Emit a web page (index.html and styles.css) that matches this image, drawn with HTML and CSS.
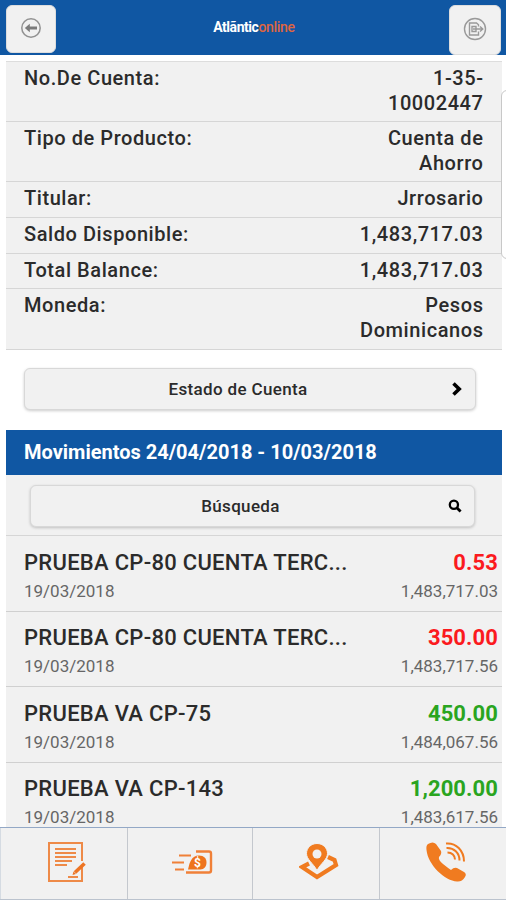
FILE: index.html
```html
<!DOCTYPE html>
<html lang="es">
<head>
  <meta charset="UTF-8">
  <meta name="viewport" content="width=device-width, initial-scale=1.0">
  <title>Atlántico Online</title>
  <link rel="stylesheet" href="styles.css">
</head>
<body>
  <div class="app">
    <header class="topbar">
      <button class="icon-btn back-btn" aria-label="Volver">
        <svg width="22" height="22" viewBox="0 0 22 22" fill="none" stroke="#929292">
          <circle cx="11" cy="11" r="9.2" stroke-width="1.5"/>
          <path d="M17 11H9" stroke="#7c7c7c" stroke-width="3"/>
          <path d="M4.8 11l5-4.2v8.4z" fill="#7c7c7c" stroke="none"/>
        </svg>
      </button>
      <div class="logo"><span class="logo-main">Atlãntic</span><span class="logo-online">online</span></div>
      <button class="icon-btn exit-btn" aria-label="Salir">
        <svg width="24" height="24" viewBox="0 0 24 24" fill="none" stroke="#999" stroke-width="1.4">
          <circle cx="12" cy="12" r="10.5"/>
          <path d="M15.5 9.5V7.8L13.5 6H6.5v12h9v-3.5"/>
          <path d="M9 9.5h4v5H9zM10 12h10M17 9.5l2.8 2.5-2.8 2.5"/>
        </svg>
      </button>
    </header>

    <main class="content">
      <!-- Datos de la cuenta -->
      <dl class="account">
        <div class="account-row"><dt>No.De Cuenta:</dt><dd>1-35-<br>10002447</dd></div>
        <div class="account-row"><dt>Tipo de Producto:</dt><dd>Cuenta de<br>Ahorro</dd></div>
        <div class="account-row"><dt>Titular:</dt><dd>Jrrosario</dd></div>
        <div class="account-row"><dt>Saldo Disponible:</dt><dd>1,483,717.03</dd></div>
        <div class="account-row"><dt>Total Balance:</dt><dd>1,483,717.03</dd></div>
        <div class="account-row"><dt>Moneda:</dt><dd>Pesos<br>Dominicanos</dd></div>
      </dl>

      <button class="wide-btn statement-btn">
        <span>Estado de Cuenta</span>
        <svg class="btn-icon" width="12" height="14" viewBox="0 0 12 14" fill="none" stroke="#000" stroke-width="3.6">
          <path d="M2.5 1.5L8.2 7l-5.7 5.5"/>
        </svg>
      </button>

      <!-- Movimientos -->
      <section class="movements">
        <h2 class="movements-title">Movimientos 24/04/2018 - 10/03/2018</h2>
        <div class="search-row">
          <button class="wide-btn search-btn">
            <span>Búsqueda</span>
            <svg class="btn-icon" width="14" height="14" viewBox="0 0 14 14" fill="none" stroke="#000">
              <circle cx="5.9" cy="5.7" r="4.1" stroke-width="2.3"/>
              <path d="M8.8 8.7l3.8 3.8" stroke-width="2.8"/>
            </svg>
          </button>
        </div>
        <div class="movement">
          <div class="movement-line"><span class="name">PRUEBA CP-80 CUENTA TERC...</span><span class="amount debit">0.53</span></div>
          <div class="movement-line small"><span>19/03/2018</span><span>1,483,717.03</span></div>
        </div>
        <div class="movement">
          <div class="movement-line"><span class="name">PRUEBA CP-80 CUENTA TERC...</span><span class="amount debit">350.00</span></div>
          <div class="movement-line small"><span>19/03/2018</span><span>1,483,717.56</span></div>
        </div>
        <div class="movement">
          <div class="movement-line"><span class="name">PRUEBA VA CP-75</span><span class="amount credit">450.00</span></div>
          <div class="movement-line small"><span>19/03/2018</span><span>1,484,067.56</span></div>
        </div>
        <div class="movement">
          <div class="movement-line"><span class="name">PRUEBA VA CP-143</span><span class="amount credit">1,200.00</span></div>
          <div class="movement-line small"><span>19/03/2018</span><span>1,483,617.56</span></div>
        </div>
      </section>
    </main>

    <div class="side-handle"></div>

    <nav class="tabbar">
      <a class="tab tab-shift">
        <svg width="40" height="42" viewBox="0 0 40 42" fill="none" stroke="#ee8a48">
          <path d="M35 25v15H2V2h33v18" stroke-width="2"/>
          <path d="M8 8h21M8 12h21M8 16h21M8 20h17M8 24h12M21 36h10" stroke-width="2"/>
          <path d="M28 31.5l9.5-9" stroke="#ed7423" stroke-width="3.6"/>
          <path d="M25.5 34l1-3.5 2.5 2.5z" fill="#ed7423" stroke="none"/>
        </svg>
      </a>
      <a class="tab tab-cash">
        <svg width="42" height="26" viewBox="0 0 42 26" fill="none" stroke="#f08038" stroke-width="2">
          <path d="M8 6.5h12M1 13.5h12M4 20.5h9"/>
          <path d="M25 2.5h13q2 0 2 2v17q0 2-2 2H15" stroke-width="2.4"/>
          <path d="M17 20.5c1.5-7 3.5-14 11-14 5 0 7.5 3 7.5 7s-2.5 7-6 7z" fill="#ee741d" stroke="none"/>
          <text class="coin" x="26.5" y="18" text-anchor="middle">$</text>
        </svg>
      </a>
      <a class="tab tab-shift">
        <svg width="40" height="38" viewBox="0 0 40 38">
          <path d="M10 20.5L3 24l15 10 19-12-1.5-5L29 14" fill="none" stroke="#f07b20" stroke-width="4.2"/>
          <path d="M18 .5c-6 0-10.500 4.500-10.500 10 0 6 6.500 9.500 10.500 17 4-7.500 10.500-11 10.500-17 0-5.500-4.500-10-10.500-10z" fill="#f07b20" stroke="#f1f1f1" stroke-width="1"/>
          <circle cx="18" cy="11" r="4.5" fill="#f1f1f1"/>
        </svg>
      </a>
      <a class="tab tab-shift">
        <svg width="42" height="42" viewBox="0 0 42 42">
          <path d="M3 3Q8 0 11 3l5 7q1 3-2 6-1 3 4 7t8 6q3-3 6-2l7 4q3 2 1 5-3 5-8 4.500C20 40 3 24 1.500 9 1.200 6 1.500 4 3 3z" fill="#f07b20"/>
          <g fill="none" stroke="#f07b20" stroke-width="2">
            <path d="M21 2.500c10-1 18 7 18 18"/>
            <path d="M21.500 7c7.500-.5 13 5 13 12.500"/>
            <path d="M22.500 11.500c4.500 0 7.500 3 7.500 7"/>
          </g>
        </svg>
      </a>
    </nav>
  </div>
</body>
</html>
```
FILE: styles.css
```css
* { box-sizing: border-box; }
body {
  margin: 0;
  background: #fff;
  font-family: Roboto, sans-serif;
  color: #2b2b2b;
}
.app {
  position: relative;
  display: flex;
  flex-direction: column;
  height: 900px;
  overflow: hidden;
}
button {
  font-family: inherit;
  color: inherit;
  background: #f1f1f1;
  border: 1px solid #ddd;
  padding: 0;
}

/* Cabecera */
.topbar {
  flex: none;
  height: 55px;
  background: #1057a3;
  display: flex;
  justify-content: space-between;
  align-items: flex-start;
  padding: 5px 5px 0 6px;
}
.icon-btn {
  display: flex;
  align-items: center;
  justify-content: center;
  border-radius: 6px;
  width: 50px;
  height: 48px;
}
.back-btn { padding-bottom: 3px; }
.exit-btn {
  width: 52px;
  height: 50px;
  padding-bottom: 2px;
}
.logo {
  font-size: 14px;
  line-height: 20px;
  margin: 12px 0 0 3px;
  display: flex;
}
.logo-main {
  color: #fff;
  font-weight: 700;
  letter-spacing: -.45px;
}
.logo-online {
  color: #df6541;
  font-weight: 500;
  letter-spacing: -.3px;
}

/* Contenido */
.content {
  flex: 1;
  min-height: 0;
  overflow: hidden;
  padding: 6px 4px 0 6px;
}
.account {
  margin: 0;
  border-top: 1px solid #ddd;
}
.account-row {
  display: flex;
  justify-content: space-between;
  background: #f1f1f1;
  border-bottom: 1px solid #d6d6d6;
  padding: 4px 18.5px 6.2px 18px;
  font-size: 20px;
  line-height: 24.5px;
  font-weight: 500;
  letter-spacing: .57px;
}
.account-row dd {
  margin: 0;
  text-align: right;
}
.wide-btn {
  position: relative;
  display: flex;
  align-items: center;
  justify-content: center;
  height: 42px;
  border-radius: 6px;
  border-color: #d8d8d8;
  box-shadow: 0 1px 3px rgba(0, 0, 0, .2);
  font-size: 17px;
  font-weight: 500;
  letter-spacing: .35px;
}
.btn-icon {
  position: absolute;
  right: 12px;
  top: 13px;
}
.statement-btn {
  width: 452px;
  margin: 18px 0 20px 18px;
  padding-right: 24px;
}
.movements-title {
  margin: 0;
  height: 45px;
  padding-left: 18px;
  background: #1057a3;
  color: #fff;
  font-size: 20px;
  line-height: 45px;
  font-weight: 700;
}
.search-row {
  background: #f1f1f1;
  border-bottom: 1px solid #d6d6d6;
  height: 61.5px;
  padding: 10px 24px;
}
.search-btn {
  width: 445px;
  padding-right: 24px;
}
.movement {
  height: 75.5px;
  background: #f1f1f1;
  border-bottom: 1px solid #d0d0d0;
  padding: 12.5px 4px 0 18px;
}
.movement-line {
  display: flex;
  justify-content: space-between;
  font-size: 22px;
  line-height: 28px;
  font-weight: 500;
}
.movement-line.small {
  font-size: 17px;
  font-weight: 400;
  color: #666;
}
.name { letter-spacing: .29px; }
.amount {
  font-weight: 700;
  letter-spacing: .1px;
}
.debit { color: #fb1a1e; }
.credit { color: #2aa51f; }

/* Panel lateral asomado */
.side-handle {
  position: absolute;
  left: 501px;
  top: 90px;
  width: 20px;
  height: 169px;
  background: #fff;
  border: 1px solid #c8c8c8;
  border-radius: 6px;
}

/* Menu inferior */
.tabbar {
  flex: none;
  height: 73px;
  display: grid;
  grid-template-columns: 128px 125px 127px 1fr;
  background: #f1f1f1;
  border-top: 1px solid #93a8c6;
  border-bottom: 1px solid #bbc3ce;
}
.tab {
  display: flex;
  align-items: center;
  justify-content: center;
  border-right: 1px solid #c4c8ce;
  padding-bottom: 3px;
}
.tab-shift { padding-left: 6px; }
.tab-cash { padding-left: 3px; }
.tab:first-child { border-left: 1px solid #d5dbe2; }
.tab:last-child { border-right: 0; }
.coin {
  font: 700 12px Roboto, sans-serif;
  fill: #fff;
  stroke: none;
}
```
